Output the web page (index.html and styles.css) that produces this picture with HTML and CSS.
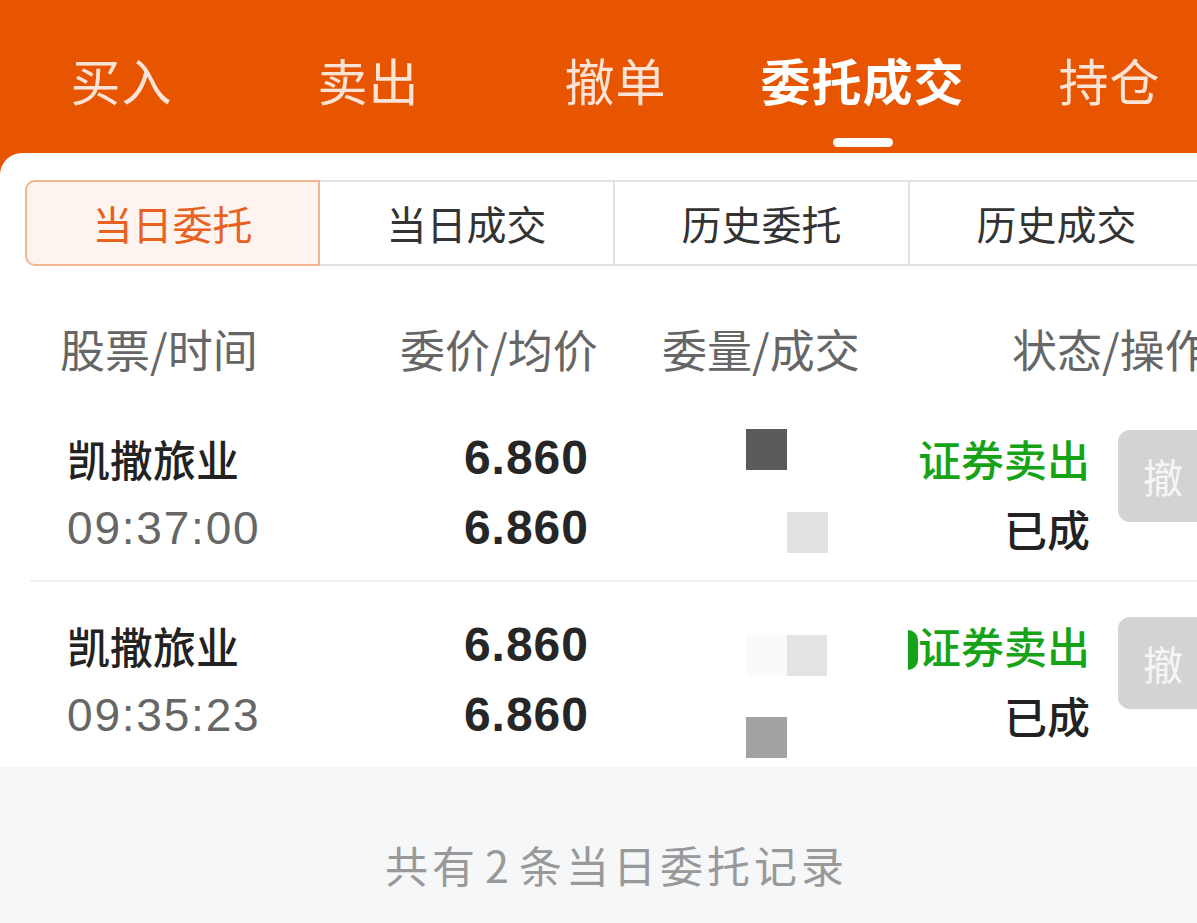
FILE: index.html
```html
<!DOCTYPE html>
<html lang="zh-CN">
<head>
<meta charset="utf-8">
<title>委托成交</title>
<link rel="stylesheet" href="styles.css">
</head>
<body>
<div class="page">
  <header class="topbar">
    <nav class="tabs">
      <div class="tab"><span class="tab-label">买入</span></div>
      <div class="tab"><span class="tab-label">卖出</span></div>
      <div class="tab"><span class="tab-label">撤单</span></div>
      <div class="tab active"><span class="tab-label">委托成交</span><span class="tab-bar"></span></div>
      <div class="tab"><span class="tab-label">持仓</span></div>
    </nav>
  </header>

  <main class="card">
    <div class="segments">
      <div class="seg active">当日委托</div>
      <div class="seg">当日成交</div>
      <div class="seg">历史委托</div>
      <div class="seg">历史成交</div>
    </div>

    <div class="thead">
      <div class="th">股票/时间</div>
      <div class="th th-right">委价/均价</div>
      <div class="th th-pad">委量/成交</div>
      <div class="th th-pad">状态/操作</div>
    </div>

    <div class="row">
      <div class="col col-name">
        <div class="line name">凯撒旅业</div>
        <div class="line time">09:37:00</div>
      </div>
      <div class="col col-price">
        <div class="line price">6.860</div>
        <div class="line price">6.860</div>
      </div>
      <div class="col col-qty">
        <div class="line qline"><span class="blk blk-a dark up"></span></div>
        <div class="line qline"><span class="blk blk-b light down"></span></div>
      </div>
      <div class="col col-status">
        <div class="line status sell">证券卖出</div>
        <div class="line status done">已成</div>
      </div>
      <div class="col col-op">
        <div class="cancel">撤</div>
      </div>
    </div>

    <div class="row">
      <div class="col col-name">
        <div class="line name">凯撒旅业</div>
        <div class="line time">09:35:23</div>
      </div>
      <div class="col col-price">
        <div class="line price">6.860</div>
        <div class="line price">6.860</div>
      </div>
      <div class="col col-qty">
        <div class="line qline"><span class="blk blk-a faint mid"></span><span class="blk light2 mid"></span></div>
        <div class="line qline"><span class="blk blk-a grey low"></span></div>
      </div>
      <div class="col col-status">
        <div class="line status sell"><span class="blob"></span>证券卖出</div>
        <div class="line status done">已成</div>
      </div>
      <div class="col col-op">
        <div class="cancel">撤</div>
      </div>
    </div>

    <footer class="summary">共有<span class="num">2</span>条当日委托记录</footer>
  </main>
</div>
</body>
</html>
```

FILE: styles.css
```css
* { box-sizing: border-box; }
html, body { margin: 0; padding: 0; }
body {
  width: 1197px;
  height: 923px;
  overflow: hidden;
  background: #f6f7f9;
  font-family: "Noto Sans CJK SC", "Liberation Sans", sans-serif;
}
.page {
  width: 1197px;
  height: 923px;
  overflow: hidden;
  display: flex;
  flex-direction: column;
  background: #e85500;
}

/* top orange bar */
.topbar {
  height: 153px;
  flex: none;
  background: #e85500;
}
.tabs {
  display: flex;
  margin-left: -2px;
  padding-top: 52px;
}
.tab {
  flex: none;
  width: 247px;
  display: flex;
  flex-direction: column;
  align-items: center;
}
.tab-label {
  font-size: 50px;
  line-height: 54px;
  color: rgba(255, 255, 255, 0.84);
  letter-spacing: 1px;
  white-space: nowrap;
}
.tab.active .tab-label {
  color: #fff;
  font-weight: 700;
}
.tab-bar {
  margin-top: 32px;
  width: 60px;
  height: 9px;
  border-radius: 5px;
  background: #fff;
}

/* white card */
.card {
  flex: 1;
  background: #fff;
  border-top-left-radius: 22px;
  display: flex;
  flex-direction: column;
}

.segments {
  display: flex;
  margin: 27px 0 0 25px;
  height: 86px;
  flex: none;
}
.seg {
  flex: none;
  width: 295px;
  height: 86px;
  display: flex;
  align-items: center;
  justify-content: center;
  font-size: 40px;
  color: #333;
  border: 2px solid #e2e3e6;
  border-left-width: 0;
  background: #fff;
}
.seg.active {
  color: #e8611f;
  background: #fdf3ef;
  border: 2px solid #f3b492;
  border-radius: 10px 0 0 10px;
}

.thead {
  display: grid;
  grid-template-columns: 340px 197px 350px 1fr;
  padding-left: 60px;
  height: 85px;
  margin-top: 44px;
  flex: none;
  align-items: center;
}
.th {
  font-size: 45px;
  color: #666;
  white-space: nowrap;
  line-height: 60px;
  margin-top: -8px;
}
.th-right { text-align: right; }
.th-pad { padding-left: 65px; }

/* data rows */
.row {
  display: grid;
  grid-template-columns: 320px 202px 329px 172px 95px;
  padding: 28px 0 17px 37px;
  margin-left: 30px;
  border-bottom: 2px solid #f2f2f2;
  flex: none;
}
.row:last-of-type { border-bottom: 0; }
.col { display: flex; flex-direction: column; }
.line {
  height: 70px;
  line-height: 70px;
  white-space: nowrap;
}
.name {
  font-size: 43px;
  font-weight: 500;
  color: #222;
}
.time {
  font-family: "Liberation Sans", "Noto Sans CJK SC", sans-serif;
  font-size: 46px;
  letter-spacing: 1.8px;
  color: #666;
}
.col-price { align-items: flex-end; }
.price {
  font-family: "Liberation Sans", "Noto Sans CJK SC", sans-serif;
  font-size: 48px;
  font-weight: 700;
  letter-spacing: 1px;
  color: #262626;
}

.qline {
  display: flex;
  padding-left: 157px;
}
.blk {
  display: block;
  width: 41px;
  height: 41px;
}
.blk-b { margin-left: 41px; }
.dark { background: #5a5a5a; }
.light { background: #e2e2e2; }
.light2 { background: #e4e4e4; width: 40px; }
.faint { background: #fafafa; }
.grey { background: #a3a3a3; }
.up { margin-top: 6px; }
.down { margin-top: 19px; }
.mid { margin-top: 25px; }
.low { margin-top: 37px; }

.col-status { align-items: flex-end; }
.status {
  font-size: 43px;
  display: flex;
  align-items: center;
  justify-content: flex-end;
}
.sell { color: #17a317; font-weight: 500; }
.done { color: #222; font-weight: 500; }
.blob {
  display: block;
  width: 10px;
  height: 40px;
  margin-top: 10px;
  border-radius: 0 20px 20px 0 / 0 20px 20px 0;
  background: #17a317;
}

.col-op { padding-left: 28px; }
.cancel {
  margin-top: 7px;
  width: 100px;
  height: 92px;
  border-radius: 12px;
  background: #d3d3d3;
  color: #f6f6f6;
  font-size: 40px;
  display: flex;
  align-items: center;
  justify-content: center;
  padding-right: 10px;
}

.summary {
  flex: 1;
  background: #f6f7f9;
  text-align: center;
  font-size: 43px;
  letter-spacing: 4px;
  color: #999;
  padding-top: 67px;
  padding-left: 36px;
  line-height: 60px;
}
.num { margin: 0 6px; }
```
